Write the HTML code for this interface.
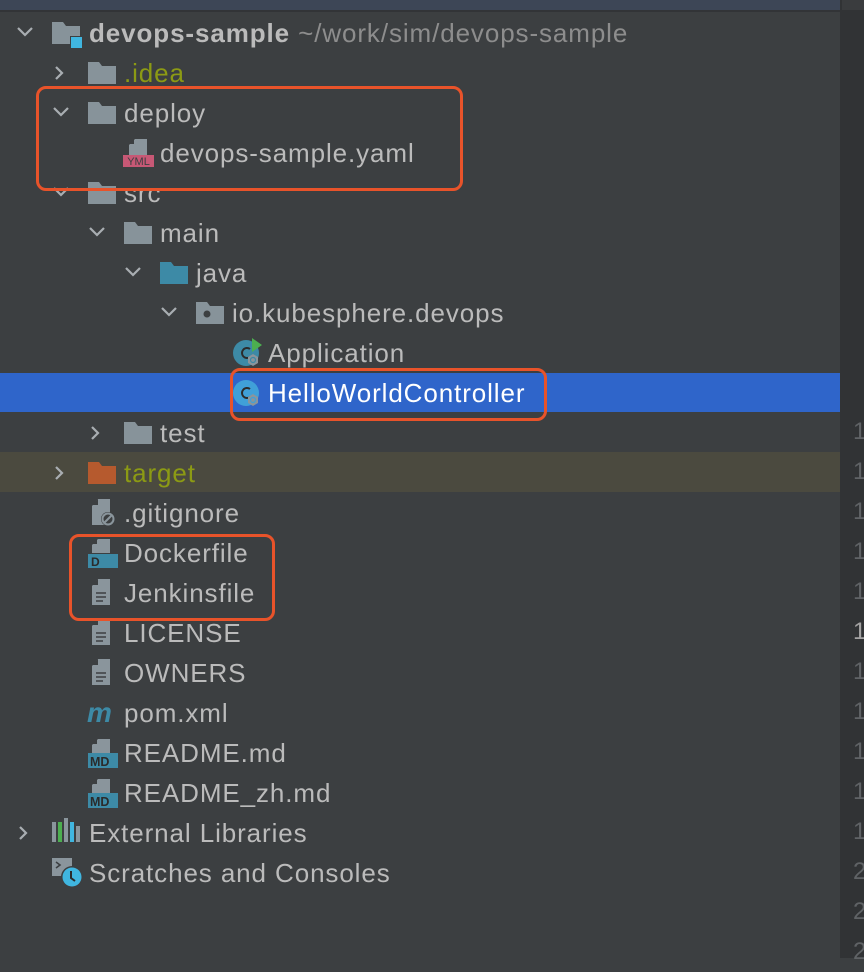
<!DOCTYPE html>
<html><head><meta charset="utf-8">
<style>
html,body{margin:0;padding:0}
body{width:864px;height:958px;position:relative;overflow:hidden;background:#3c3f41;font-family:"Liberation Sans",sans-serif}
.top{position:absolute;left:0;top:0;width:840px;height:10px;background:#3d4656}
.topline{position:absolute;left:0;top:10px;width:840px;height:2px;background:#323437}
.gut{position:absolute;left:840px;top:0;width:24px;height:958px;background:#313335}
.gtop{position:absolute;left:842px;top:0;width:22px;height:10px;background:#3a3c3e}
.ln{position:absolute;left:853px;font-size:24px;color:#606366;line-height:40px;height:40px}
.row{position:absolute;left:0;width:840px;height:40px}
.t{position:absolute;font-size:26px;letter-spacing:0.9px;line-height:40px;color:#bbbbbb;white-space:nowrap}
.box{position:absolute;border:3.5px solid #e8532a;border-radius:10px;box-sizing:border-box}
</style></head><body>
<div class="top"></div><div class="topline"></div>
<div class="gut"></div><div class="gtop"></div>
<div class="row" style="top:373px;height:39px;background:#2f65ca"></div>
<div class="row" style="top:452px;background:#4b4a3f"></div>

<div class="ln" style="top:412px">1</div>
<div class="ln" style="top:452px">1</div>
<div class="ln" style="top:492px">1</div>
<div class="ln" style="top:532px">1</div>
<div class="ln" style="top:572px">1</div>
<div class="ln" style="top:612px;color:#a4a3a3">1</div>
<div class="ln" style="top:652px">1</div>
<div class="ln" style="top:692px">1</div>
<div class="ln" style="top:732px">1</div>
<div class="ln" style="top:772px">1</div>
<div class="ln" style="top:812px">1</div>
<div class="ln" style="top:852px">2</div>
<div class="ln" style="top:892px">2</div>
<div class="ln" style="top:932px">2</div>

<svg width="840" height="958" style="position:absolute;left:0;top:0">
<defs>
<g id="fold"><path d="M0 0H11L14 4H28V22H0Z"/></g>
<g id="doc"><path d="M6 0H18V26H0V7Z" fill="#8a959c"/><path d="M0 6L6 0V6Z" fill="#3c3f41"/></g>
</defs>
<g fill="none" stroke="#a9aeb2" stroke-width="2.2">
<path d="M18 28L25 35L32 28"/>
<path d="M56 67L62 73L56 79"/>
<path d="M54 108L61 115L68 108"/>
<path d="M54 188L61 195L68 188"/>
<path d="M90 228L97 235L104 228"/>
<path d="M126 268L133 275L140 268"/>
<path d="M162 308L169 315L176 308"/>
<path d="M92 427L98 433L92 439"/>
<path d="M56 467L62 473L56 479"/>
<path d="M20 827L26 833L20 839"/>
</g>
<g transform="translate(52,22)" fill="#87939a"><use href="#fold"/></g>
<rect x="70" y="36" width="12" height="12" fill="#3c3f41"/>
<rect x="71" y="37" width="11" height="11" fill="#40b6e0"/>
<g fill="#87939a">
<use href="#fold" x="88" y="62"/>
<use href="#fold" x="88" y="102"/>
<use href="#fold" x="88" y="182"/>
<use href="#fold" x="124" y="222"/>
<use href="#fold" x="124" y="422"/>
<use href="#fold" x="196" y="302"/>
</g>
<circle cx="207" cy="314" r="3.5" fill="#3c3f41"/>
<use href="#fold" x="160" y="262" fill="#3d8aa6"/>
<use href="#fold" x="88" y="462" fill="#b65a2e"/>
<g transform="translate(129,139)"><path d="M6 0H18V18H0V6Z" fill="#8a959c"/><path d="M0 5L5 0V5Z" fill="#3c3f41"/></g>
<rect x="123" y="155" width="31" height="12" fill="#c75875"/>
<text x="138.5" y="165" font-size="11" font-family="Liberation Sans" fill="#3c3f41" text-anchor="middle">YML</text>
<circle cx="246" cy="353" r="13" fill="#3d8aa6"/>
<path d="M252 338L262 345L252 352Z" fill="#4caf50"/>
<path d="M250 349A5 5 0 1 0 250 357" stroke="#2b2b2b" stroke-width="2" fill="none"/>
<path d="M253 354l5 3v6l-5 3l-5-3v-6z" fill="#8a959c"/>
<circle cx="253" cy="360" r="2.5" fill="none" stroke="#3d8aa6" stroke-width="1.2"/>
<circle cx="246" cy="393" r="13" fill="#40a0d8"/>
<path d="M250 389A5 5 0 1 0 250 397" stroke="#2b2b2b" stroke-width="2" fill="none"/>
<path d="M253 394l5 3v6l-5 3l-5-3v-6z" fill="#8a959c"/>
<circle cx="253" cy="400" r="2.5" fill="none" stroke="#40a0d8" stroke-width="1.2"/>
<use href="#doc" x="92" y="499"/>
<circle cx="108" cy="519" r="7" fill="#3c3f41"/>
<circle cx="108" cy="519" r="5.5" fill="none" stroke="#8a959c" stroke-width="2"/>
<path d="M104 523L112 515" stroke="#8a959c" stroke-width="2"/>
<g transform="translate(92,539)"><path d="M6 0H18V14H0V6Z" fill="#8a959c"/><path d="M0 5L5 0V5Z" fill="#3c3f41"/></g>
<rect x="88" y="554" width="30" height="14" fill="#3d8aa6"/>
<text x="91" y="566" font-size="12" font-weight="bold" font-family="Liberation Sans" fill="#2b2b2b">D</text>
<g><use href="#doc" x="92" y="579"/><use href="#doc" x="92" y="619"/><use href="#doc" x="92" y="659"/></g>
<g stroke="#3c3f41" stroke-width="1.6">
<path d="M96 593h10M96 597h10M96 601h7"/>
<path d="M96 633h10M96 637h10M96 641h7"/>
<path d="M96 673h10M96 677h10M96 681h7"/>
</g>
<text x="87" y="722" font-size="28" font-style="italic" font-weight="bold" font-family="Liberation Sans" fill="#3d8aa6">m</text>
<g transform="translate(92,739)"><path d="M6 0H18V14H0V6Z" fill="#8a959c"/><path d="M0 5L5 0V5Z" fill="#3c3f41"/></g>
<rect x="88" y="753" width="30" height="15" fill="#3d8aa6"/>
<text x="90" y="766" font-size="12.5" font-weight="bold" font-family="Liberation Sans" fill="#2b2b2b">MD</text>
<g transform="translate(92,779)"><path d="M6 0H18V14H0V6Z" fill="#8a959c"/><path d="M0 5L5 0V5Z" fill="#3c3f41"/></g>
<rect x="88" y="793" width="30" height="15" fill="#3d8aa6"/>
<text x="90" y="806" font-size="12.5" font-weight="bold" font-family="Liberation Sans" fill="#2b2b2b">MD</text>
<rect x="52" y="822" width="4" height="20" fill="#8a959c"/>
<rect x="58" y="822" width="4" height="20" fill="#4caf50"/>
<rect x="64" y="818" width="4" height="24" fill="#8a959c"/>
<rect x="70" y="822" width="4" height="20" fill="#40b6e0"/>
<rect x="76" y="826" width="4" height="16" fill="#8a959c"/>
<rect x="52" y="858" width="20" height="18" fill="#8a959c"/>
<path d="M56 862l4 3-4 3" stroke="#3c3f41" stroke-width="1.6" fill="none"/>
<circle cx="72" cy="877" r="11" fill="#3c3f41"/>
<circle cx="72" cy="877" r="9.5" fill="#40b6e0"/>
<path d="M71 871v7l4 3" stroke="#2b2b2b" stroke-width="2" fill="none"/>
</svg>

<div class="t" style="left:89px;top:13px;font-weight:bold;color:#bbbbbb">devops-sample <span style="font-weight:normal;color:#8d8d8d">~/work/sim/devops-sample</span></div>
<div class="t" style="left:124px;top:53px;color:#8c9a14">.idea</div>
<div class="t" style="left:124px;top:93px">deploy</div>
<div class="t" style="left:160px;top:133px">devops-sample.yaml</div>
<div class="t" style="left:124px;top:173px">src</div>
<div class="t" style="left:160px;top:213px">main</div>
<div class="t" style="left:196px;top:253px">java</div>
<div class="t" style="left:232px;top:293px">io.kubesphere.devops</div>
<div class="t" style="left:268px;top:333px">Application</div>
<div class="t" style="left:268px;top:373px;color:#ffffff">HelloWorldController</div>
<div class="t" style="left:160px;top:413px">test</div>
<div class="t" style="left:124px;top:453px;color:#8c9a14">target</div>
<div class="t" style="left:124px;top:493px">.gitignore</div>
<div class="t" style="left:124px;top:533px">Dockerfile</div>
<div class="t" style="left:124px;top:573px">Jenkinsfile</div>
<div class="t" style="left:124px;top:613px">LICENSE</div>
<div class="t" style="left:124px;top:653px">OWNERS</div>
<div class="t" style="left:124px;top:693px">pom.xml</div>
<div class="t" style="left:124px;top:733px">README.md</div>
<div class="t" style="left:124px;top:773px">README_zh.md</div>
<div class="t" style="left:89px;top:813px">External Libraries</div>
<div class="t" style="left:89px;top:853px">Scratches and Consoles</div>

<div class="box" style="left:36px;top:86px;width:427px;height:105px"></div>
<div class="box" style="left:230px;top:368px;width:317px;height:53px"></div>
<div class="box" style="left:69px;top:534px;width:206px;height:87px"></div>
</body></html>
